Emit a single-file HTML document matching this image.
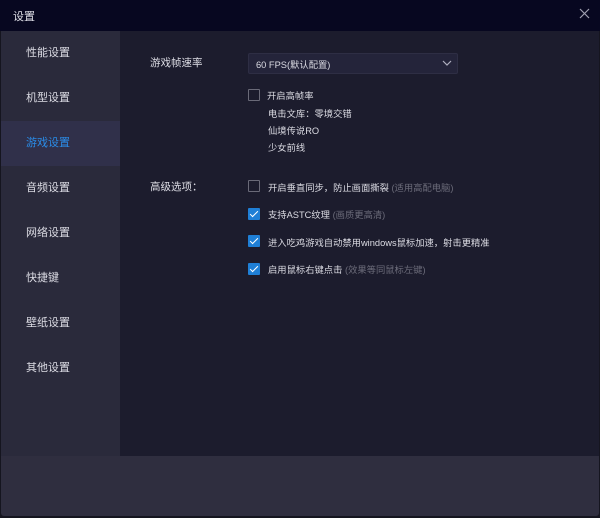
<!DOCTYPE html>
<html><head><meta charset="utf-8"><style>
*{margin:0;padding:0;box-sizing:border-box}
body{width:600px;height:518px;background:#15151f;font-family:"Liberation Sans","Noto Sans CJK SC",sans-serif;font-size:11px;color:#d4d4dc;position:relative;overflow:hidden}
.abs{position:absolute}
.title{left:0;top:0;width:600px;height:31px;background:#070720}
.side{left:1px;top:31px;width:119px;height:425px;background:#2a2a3b}
.content{left:120px;top:31px;width:479px;height:425px;background:#1c1c2d}
.footer{left:1px;top:456px;width:598px;height:60px;background:#2f2e3f;border-radius:0 0 3px 3px}
.item{position:absolute;left:26px;font-size:11px;color:#dcdce4}
.cb{position:absolute;left:248px;width:12px;height:12px;border:1px solid #6a6a78;border-radius:1px}
.cb.on{background:#1f7fd6;border-color:#1f7fd6}
.cb.on::after{content:"";position:absolute;left:3px;top:0px;width:3px;height:7px;border:solid #fff;border-width:0 1.5px 1.5px 0;transform:rotate(45deg)}
.t{position:absolute;font-size:9.3px;color:#dcdce4;white-space:nowrap}
.g{color:#6c6c7a}
</style></head><body>
<div class="abs title"></div>
<div class="abs" style="left:13px;top:8px;font-size:11px;color:#e0e0e8">设置</div>
<svg class="abs" style="left:579px;top:8px" width="11" height="11"><path d="M1 1L10 10M10 1L1 10" stroke="#a0a0b0" stroke-width="1.2"/></svg>
<div class="abs side"></div>
<div class="abs" style="left:1px;top:121px;width:119px;height:45px;background:#30304a"></div>
<div class="abs" style="left:120px;top:121px;width:2px;height:45px;background:#1f8ae6"></div>
<div class="abs content"></div>
<div class="abs footer"></div>
<div class="item" style="top:44px">性能设置</div>
<div class="item" style="top:89px">机型设置</div>
<div class="item" style="top:134px;color:#2a8ce8">游戏设置</div>
<div class="item" style="top:179px">音频设置</div>
<div class="item" style="top:224px">网络设置</div>
<div class="item" style="top:269px">快捷键</div>
<div class="item" style="top:314px">壁纸设置</div>
<div class="item" style="top:359px">其他设置</div>

<div class="t" style="left:150px;top:55px;font-size:10.5px">游戏帧速率</div>
<div class="abs" style="left:248px;top:53px;width:210px;height:21px;background:#24243a;border:1px solid #2e2e44;border-radius:2px"></div>
<div class="t" style="left:256px;top:57px">60 FPS(默认配置)</div>
<svg class="abs" style="left:442px;top:60px" width="10" height="7"><path d="M1 1L5 5L9 1" stroke="#b0b0c0" fill="none" stroke-width="1.2"/></svg>
<div class="cb" style="top:89px"></div>
<div class="t" style="left:267px;top:88px">开启高帧率</div>
<div class="t" style="left:268px;top:106px">电击文库：零境交错</div>
<div class="t" style="left:268px;top:123px">仙境传说RO</div>
<div class="t" style="left:268px;top:140px">少女前线</div>
<div class="t" style="left:150px;top:179px;font-size:10.5px">高级选项：</div>
<div class="cb" style="top:180px"></div>
<div class="t" style="left:268px;top:180px">开启垂直同步，防止画面撕裂 <span class="g">(适用高配电脑)</span></div>
<div class="cb on" style="top:208px"></div>
<div class="t" style="left:268px;top:207px">支持ASTC纹理 <span class="g">(画质更高清)</span></div>
<div class="cb on" style="top:235px"></div>
<div class="t" style="left:268px;top:235px">进入吃鸡游戏自动禁用windows鼠标加速，射击更精准</div>
<div class="cb on" style="top:263px"></div>
<div class="t" style="left:268px;top:262px">启用鼠标右键点击 <span class="g">(效果等同鼠标左键)</span></div>
</body></html>
